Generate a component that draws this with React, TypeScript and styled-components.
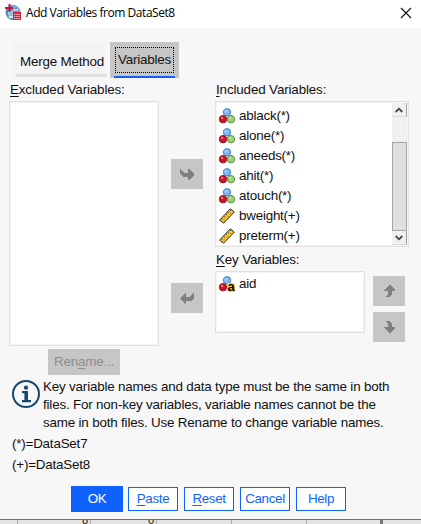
import React from "react";
import styled, { createGlobalStyle } from "styled-components";

const Global = createGlobalStyle`
  * { box-sizing: border-box; }
  body { margin: 0; background: #d9d9d9; overflow: hidden; }
  u { text-decoration-thickness: 1px; text-underline-offset: 2px; text-decoration-skip-ink: none; }
`;

const Screen = styled.div`
  width: 421px;
  height: 524px;
  overflow: hidden;
  display: flex;
  flex-direction: column;
  font: 13.4px/18px "Liberation Sans", Arial, sans-serif;
  letter-spacing: -0.14px;
  color: #111;
`;
const Dialog = styled.main`
  height: 520px;
  flex: none;
  background: #f7f7f7;
  border-bottom: 1px solid #707070;
`;
const TitleBar = styled.header`
  height: 28px;
  padding: 0 9px 3px 5px;
  display: flex;
  align-items: center;
  background: #fff;
  color: #000;
`;
const Title = styled.h1`
  margin: 0 auto 0 5px;
  font: 400 12px/20px "Open Sans", "Noto Sans", sans-serif;
  letter-spacing: -0.45px;
  white-space: nowrap;
`;
const Tabs = styled.nav`
  display: flex;
  gap: 3px;
  padding: 14px 0 0 12px;
`;
const Tab = styled.div<{ $active?: boolean }>`
  width: ${(p) => (p.$active ? 69 : 95)}px;
  height: 36px;
  display: flex;
  flex-direction: column;
  justify-content: space-between;
  align-items: ${(p) => (p.$active ? "center" : "flex-end")};
  padding: ${(p) => (p.$active ? "5px 4px 0" : "11px 0 1px 4px")};
  background: ${(p) => (p.$active ? "#c6c6c6" : "#f4f4f4")};
  &::after {
    content: "";
    width: ${(p) => (p.$active ? 61 : 91)}px;
    height: ${(p) => (p.$active ? 2 : 3)}px;
    background: ${(p) => (p.$active ? "#0f62fe" : "#e0e0e0")};
  }
`;
const TabText = styled.span<{ $active?: boolean }>`
  width: ${(p) => (p.$active ? 59 : 87)}px;
  height: ${(p) => (p.$active ? 26 : 18)}px;
  padding: ${(p) => (p.$active ? "3px 0 0 2px" : 0)};
  border: ${(p) => (p.$active ? "1px dotted #000" : 0)};
  white-space: nowrap;
  letter-spacing: -0.2px;
`;
const Columns = styled.section`
  display: grid;
  grid-template-columns: 150px 56px 194px;
  height: 298px;
  padding: 3px 0 0 9px;
`;
const Column = styled.div`
  display: flex;
  flex-direction: column;
`;
const Label = styled.div`
  height: 20px;
  padding-left: 1px;
  flex: none;
  white-space: nowrap;
`;
const KeyLabel = styled(Label)`
  height: 24px;
  padding-top: 4px;
`;
const List = styled.div<{ $h: number; $w: number }>`
  width: ${(p) => p.$w}px;
  height: ${(p) => p.$h}px;
  flex: none;
  display: flex;
  background: #fff;
  border: 1px solid #e0e0e0;
  box-shadow: inset 0 0 0 1px #f5f5f5;
  overflow: hidden;
`;
const Items = styled.div<{ $top: number }>`
  flex: 1;
  padding: ${(p) => p.$top}px 0 0 3px;
`;
const Item = styled.div`
  height: 20px;
  display: flex;
  align-items: center;
  gap: 4px;
  white-space: nowrap;
  letter-spacing: -0.22px;
  svg { overflow: visible; }
`;
const ScrollBar = styled.div`
  width: 15px;
  margin: 1px 1px 1px 0;
  display: flex;
  flex-direction: column;
  background: #f0f0f0;
`;
const ScrollEnd = styled.div`
  height: 14px;
  display: flex;
  align-items: center;
  justify-content: center;
  border-right: 1px solid #a0a0a0;
  border-bottom: 1px solid #dcdcdc;
`;
const Thumb = styled.div`
  flex: 1;
  margin-top: 25px;
  background: #dfdfdf;
  border: 1px solid #a6a6a6;
`;
const MoveButtons = styled.div`
  display: flex;
  flex-direction: column;
  gap: 94px;
  padding: 78px 0 0 12px;
`;
const IconButton = styled.button`
  width: 32px;
  height: 30px;
  padding: 0;
  border: 0;
  display: flex;
  align-items: center;
  justify-content: center;
  background: #c6c6c6;
`;
const KeyRow = styled.div`
  display: flex;
  gap: 8px;
`;
const OrderButtons = styled.div`
  display: flex;
  flex-direction: column;
  gap: 6px;
  padding-top: 5px;
`;
const Rename = styled.button`
  width: 72px;
  height: 26px;
  margin: -27px 0 0 48px;
  padding: 0;
  display: block;
  border: 0;
  background: #c6c6c6;
  color: #8d8d8d;
  font: inherit;
  letter-spacing: -0.2px;
`;
const Info = styled.section`
  display: flex;
  gap: 3px;
  padding: 3px 0 0 12px;
`;
const Message = styled.p`
  margin: 0;
  white-space: nowrap;
  letter-spacing: -0.18px;
`;
const Line = styled.span`
  display: block;
`;
const Legend = styled.div`
  padding: 1px 0 0 12px;
  line-height: 21px;
  letter-spacing: -0.2px;
`;
const Actions = styled.footer`
  display: flex;
  align-items: center;
  gap: 6px;
  padding: 11px 0 0 71px;
`;
const Action = styled.button<{ $primary?: boolean }>`
  width: ${(p) => (p.$primary ? 52 : 50)}px;
  height: ${(p) => (p.$primary ? 26 : 24)}px;
  margin-right: ${(p) => (p.$primary ? -1 : 0)}px;
  padding: 0;
  border: 1px solid #0f62fe;
  background: ${(p) => (p.$primary ? "#0f62fe" : "#fff")};
  color: ${(p) => (p.$primary ? "#fff" : "#0f62fe")};
  font: inherit;
  letter-spacing: -0.35px;
`;
const Sheet = styled.div`
  height: 4px;
  flex: none;
  display: grid;
  grid-template-columns: 18px 73px 66px 75px 75px 76px 1fr;
  background: #e3e3e3;
  font-size: 11px;
  line-height: 8px;
`;
const Cell = styled.div<{ $edge?: boolean }>`
  height: 4px;
  overflow: hidden;
  display: flex;
  align-items: flex-end;
  justify-content: flex-end;
  padding-right: 2px;
  border-right: ${(p) => (p.$edge ? "3px solid #777" : "1px solid #b0b0b0")};
  &:last-child { border-right: 0; }
`;

function AppIcon() {
  return (
    <svg width="16" height="17" viewBox="0 0 16 17">
      <circle cx="8" cy="8.5" r="7.5" fill="#4d8fbf" />
      <path d="M7 1.2a7.2 7.2 0 0 1 8 6.3H7z" fill="#78a9d0" />
      <path d="M3 7h5v7H4zM8 5h5v2H8z" fill="#d9ebf7" />
      <path d="M4 9h4M4 11h4M8 4v5M11 4v4" stroke="#5b94c5" />
      <path d="M4.5 0v8M0 4h8" stroke="#c4133b" strokeWidth="2" />
      <path d="M8 8h8v8H8z" fill="#d92542" />
      <path d="M9 10.5h6M9 12.5h6M9 14.5h6" stroke="#f8bdc5" strokeDasharray="1.4 .8" />
    </svg>
  );
}

function Nominal({ text = false }: { text?: boolean }) {
  return (
    <svg width="16" height="16" viewBox="0 0 16 16">
      <circle cx="8" cy="4.3" r="3.7" fill="#80b5ec" stroke="#4385ca" />
      <circle cx="7" cy="3.5" r="1.4" fill="#a9cff4" />
      <circle cx="4" cy="11.2" r="3.7" fill="#c9142b" stroke="#9e1528" />
      <circle cx="3.2" cy="10" r="1.2" fill="#ec7180" />
      {text ? (
        <>
          <rect x="8" y="7" width="8" height="9" rx="1.5" fill="#ffd34b" />
          <text x="8.4" y="15" fontFamily="Liberation Sans" fontWeight="700" fontSize="13" fill="#000">a</text>
        </>
      ) : (
        <>
          <circle cx="12" cy="11.2" r="3.7" fill="#9bcf72" stroke="#5f9442" />
          <circle cx="11" cy="10" r="1.2" fill="#c4e7a7" />
        </>
      )}
    </svg>
  );
}

function Ruler() {
  return (
    <svg width="16" height="16" viewBox="0 0 16 16">
      <path d="M.6 12.2 11.3.8l4 3.2L4.6 15.2z" fill="#fdc72e" stroke="#292929" />
      <path d="m2.6 10.3 1.5 1.2M4.6 8.2l1.5 1.2M6.6 6l1.5 1.2M8.6 3.9l1.5 1.2M10.5 1.9 12 3.1" stroke="#292929" strokeWidth=".8" />
      <path d="m5 12.4.9-.9M8 9.3l.9-.9M11 6.1l.9-.9" stroke="#6c530d" />
    </svg>
  );
}

type Direction = "right" | "left" | "up" | "down";
const arrows: Record<Direction, string> = {
  right: "M0 0h1l3 4h4V0h1l5 5v1l-5 5H8V8H3L0 5z",
  left: "M14 0h-1l-3 4H6V0H5L0 5v1l5 5h1V8h5l3-3z",
  up: "M5 0h1l5 5v1H8v3l-3 3H2v-1l2-2V6H0V5z",
  down: "M5 12h1l5-5V6H8V3L5 0H2v1l2 2v3H0v1z",
};
function Arrow({ direction }: { direction: Direction }) {
  const wide = direction === "right" || direction === "left";
  return (
    <svg width={wide ? 14 : 11} height={wide ? 11 : 12} shapeRendering="crispEdges">
      <path d={arrows[direction]} fill="#808080" />
    </svg>
  );
}

function Chevron({ up = false }: { up?: boolean }) {
  return (
    <svg width="8" height="6" viewBox="0 0 8 6">
      <path d={up ? "M.7 5 4 1.7 7.3 5" : "M.7 1 4 4.3 7.3 1"} fill="none" stroke="#444" strokeWidth="1.8" />
    </svg>
  );
}

const variables = ["ablack(*)", "alone(*)", "aneeds(*)", "ahit(*)", "atouch(*)", "bweight(+)", "preterm(+)"];

export default function App() {
  return (
    <Screen>
      <Global />
      <Dialog>
        <TitleBar>
          <AppIcon />
          <Title>Add Variables from DataSet8</Title>
          <svg width="12" height="12" viewBox="0 0 12 12">
            <path d="m1 1 10 10M11 1 1 11" stroke="#111" strokeWidth="1.1" />
          </svg>
        </TitleBar>
        <Tabs>
          <Tab><TabText>Merge Method</TabText></Tab>
          <Tab $active><TabText $active>Variables</TabText></Tab>
        </Tabs>
        <Columns>
          <Column>
            <Label><u>E</u>xcluded Variables:</Label>
            <List $w={150} $h={245} />
          </Column>
          <MoveButtons>
            <IconButton><Arrow direction="right" /></IconButton>
            <IconButton><Arrow direction="left" /></IconButton>
          </MoveButtons>
          <Column>
            <Label><u>I</u>ncluded Variables:</Label>
            <List $w={194} $h={146}>
              <Items $top={4}>
                {variables.map((name) => (
                  <Item key={name}>{name.endsWith("(+)") ? <Ruler /> : <Nominal />}{name}</Item>
                ))}
              </Items>
              <ScrollBar>
                <ScrollEnd><Chevron up /></ScrollEnd>
                <Thumb />
                <ScrollEnd><Chevron /></ScrollEnd>
              </ScrollBar>
            </List>
            <KeyLabel><u>K</u>ey Variables:</KeyLabel>
            <KeyRow>
              <List $w={150} $h={62}>
                <Items $top={2}><Item><Nominal text />aid</Item></Items>
              </List>
              <OrderButtons>
                <IconButton><Arrow direction="up" /></IconButton>
                <IconButton><Arrow direction="down" /></IconButton>
              </OrderButtons>
            </KeyRow>
          </Column>
        </Columns>
        <Rename>Ren<u>a</u>me...</Rename>
        <Info>
          <svg width="28" height="30" viewBox="0 0 28 30">
            <circle cx="14" cy="16" r="13" fill="none" stroke="#154771" strokeWidth="2" />
            <circle cx="14" cy="9.7" r="2.1" fill="#154771" />
            <path d="M10 13h6v9h3v2.3h-9V22h2.4v-6.7H10z" fill="#154771" />
          </svg>
          <Message>
            <Line>Key variable names and data type must be the same in both</Line>
            <Line>files. For non-key variables, variable names cannot be the</Line>
            <Line>same in both files. Use Rename to change variable names.</Line>
          </Message>
        </Info>
        <Legend>
          <Line>(*)=DataSet7</Line>
          <Line>(+)=DataSet8</Line>
        </Legend>
        <Actions>
          <Action $primary>OK</Action>
          <Action><u>P</u>aste</Action>
          <Action><u>R</u>eset</Action>
          <Action>Cancel</Action>
          <Action>Help</Action>
        </Actions>
      </Dialog>
      <Sheet>
        <Cell /><Cell>8</Cell><Cell>0</Cell><Cell /><Cell /><Cell $edge /><Cell />
      </Sheet>
    </Screen>
  );
}
